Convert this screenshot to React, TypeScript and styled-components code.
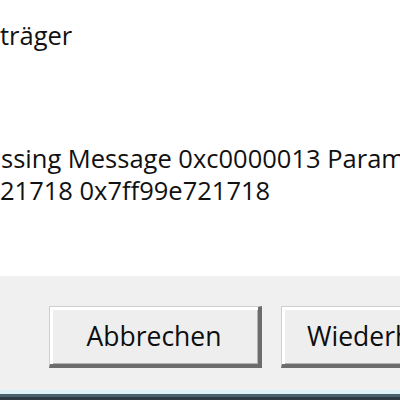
import React from "react";
import styled, { createGlobalStyle } from "styled-components";

const Global = createGlobalStyle`
  html, body { margin: 0; padding: 0; background: #ffffff; }
  body { width: 400px; height: 400px; overflow: hidden; }
  #root { width: 400px; height: 400px; }
`;

const Dialog = styled.div`
  width: 400px;
  height: 400px;
  display: flex;
  flex-direction: column;
  overflow: hidden;
  font-family: "Open Sans", "Noto Sans", sans-serif;
  color: #111111;
`;

const Body = styled.div`
  height: 276px;
  flex: none;
  background: #ffffff;
  display: flex;
  flex-direction: column;
  overflow: hidden;
`;

const Title = styled.div`
  margin-top: 18px;
  height: 34px;
  font-size: 25.5px;
  line-height: 34px;
  white-space: nowrap;
`;

const Message = styled.div`
  margin-top: 89px;
  display: flex;
  flex-direction: column;
`;

const Line = styled.div<{ $shift: number }>`
  margin-left: ${(p) => p.$shift}px;
  font-size: 25.5px;
  line-height: 35px;
  margin-bottom: -3px;
  white-space: nowrap;
`;

const Footer = styled.div`
  flex: 1;
  background: #f0f0f0;
  display: flex;
  gap: 19px;
  padding: 30px 0 0 49px;
  overflow: hidden;
`;

const Button = styled.div`
  flex: none;
  width: 208px;
  height: 57px;
  box-sizing: content-box;
  background: #eeeeee;
  border-top: 1px solid #cfcfcf;
  border-left: 1px solid #cfcfcf;
  border-right: 4px solid #6c6c6c;
  border-bottom: 4px solid #6c6c6c;
  box-shadow: inset 3px 3px 0 #ffffff, inset -1px -1px 0 #b4b4b4;
  display: flex;
  align-items: center;
  justify-content: center;
  font-size: 26.5px;
  color: #0e0e0e;
  white-space: nowrap;
`;

const Frame = styled.div`
  flex: none;
  height: 10px;
  display: flex;
  flex-direction: column;
`;

const Band = styled.div<{ $color: string; $h: number }>`
  height: ${(p) => p.$h}px;
  background: ${(p) => p.$color};
`;

export default function App() {
  return (
    <>
      <Global />
      <Dialog>
        <Body>
          <Title>träger</Title>
          <Message>
            <Line $shift={1}>ssing Message 0xc0000013 Param</Line>
            <Line $shift={0}>21718 0x7ff99e721718</Line>
          </Message>
        </Body>
        <Footer>
          <Button>Abbrechen</Button>
          <Button>Wiederholen</Button>
        </Footer>
        <Frame>
          <Band $color="#dcf0fa" $h={4} />
          <Band $color="#4a5e6c" $h={3} />
          <Band $color="#2c3944" $h={3} />
        </Frame>
      </Dialog>
    </>
  );
}
